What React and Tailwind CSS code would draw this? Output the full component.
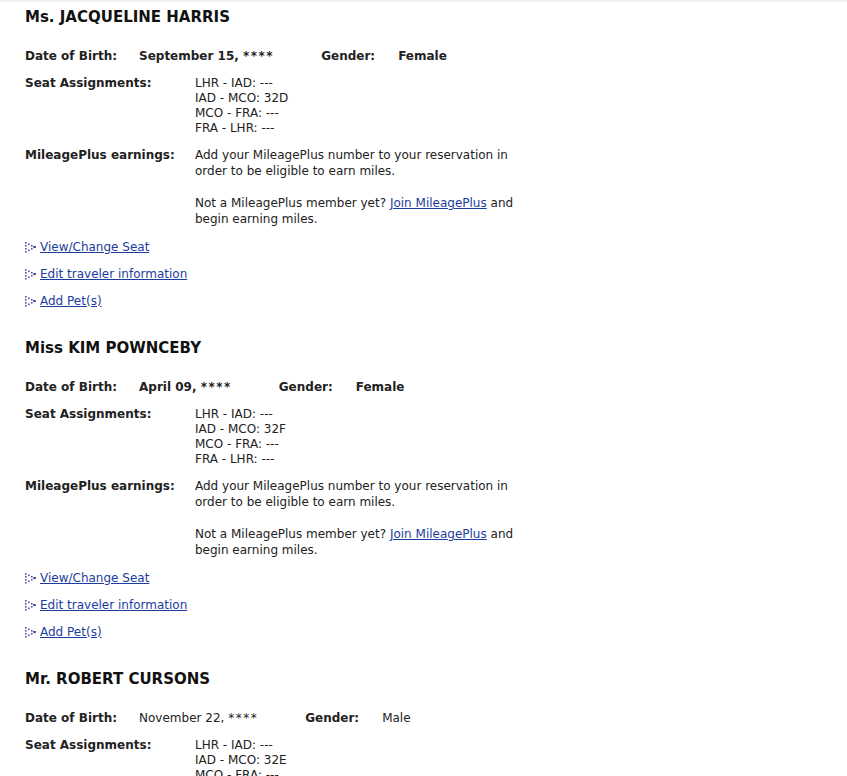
import React from "react";

const travelers = [
  {
    name: "Ms. JACQUELINE HARRIS",
    dob: "September 15, ",
    gender: "Female",
    boldValues: true,
    seats: ["LHR - IAD: ---", "IAD - MCO: 32D", "MCO - FRA: ---", "FRA - LHR: ---"],
  },
  {
    name: "Miss KIM POWNCEBY",
    dob: "April 09, ",
    gender: "Female",
    boldValues: true,
    seats: ["LHR - IAD: ---", "IAD - MCO: 32F", "MCO - FRA: ---", "FRA - LHR: ---"],
  },
  {
    name: "Mr. ROBERT CURSONS",
    dob: "November 22, ",
    gender: "Male",
    boldValues: false,
    seats: ["LHR - IAD: ---", "IAD - MCO: 32E", "MCO - FRA: ---", "FRA - LHR: ---"],
  },
];

function Arrow() {
  const dots = [
    [1, 1], [1, 4], [1, 7], [1, 10],
    [4, 2.5], [4, 8.5],
    [7, 4], [7, 7],
    [10, 5.5],
  ];
  return (
    <svg width="13" height="12" viewBox="0 0 13 12" className="shrink-0">
      {dots.map(([x, y], i) => (
        <rect key={i} x={x} y={y} width="1.6" height="1.6" fill="#5a4fb0" />
      ))}
      <rect x="9" y="5.2" width="3" height="1.4" fill="#3a3a7a" />
    </svg>
  );
}

function LinkRow({ children }) {
  return (
    <div className="flex items-center gap-[3px] h-[27px]">
      <Arrow />
      <a href="#" className="text-[#1c3d9e] underline">{children}</a>
    </div>
  );
}

function Traveler({ t }) {
  const valueClass = t.boldValues ? "font-bold" : "font-normal";
  return (
    <div className="pb-[24px]">
      <h2 className="pt-[1px] text-[15px] font-bold leading-[18px] text-[#111]">{t.name}</h2>
      <div className="flex items-baseline mt-[21px] leading-[18px]">
        <span className="font-bold mr-[22px]">Date of Birth:</span>
        <span className={valueClass + " mr-[47px]"}>
          {t.dob}
          <span className="tracking-[1.5px]">****</span>
        </span>
        <span className="font-bold mr-[23px]">Gender:</span>
        <span className={valueClass}>{t.gender}</span>
      </div>
      <div className="grid grid-cols-[170px_330px] mt-[11px] leading-[15px]">
        <span className="font-bold">Seat Assignments:</span>
        <div>
          {t.seats.map((s) => (
            <div key={s}>{s}</div>
          ))}
        </div>
      </div>
      <div className="grid grid-cols-[170px_330px] mt-[11px] leading-[16px]">
        <span className="font-bold">MileagePlus earnings:</span>
        <div>
          <p>Add your MileagePlus number to your reservation in order to be eligible to earn miles.</p>
          <p className="mt-[16px]">
            Not a MileagePlus member yet? <a href="#" className="text-[#1c3d9e] underline">Join MileagePlus</a> and begin earning miles.
          </p>
        </div>
      </div>
      <div className="mt-[6px] -ml-[1px]">
        <LinkRow>View/Change Seat</LinkRow>
        <LinkRow>Edit traveler information</LinkRow>
        <LinkRow>Add Pet(s)</LinkRow>
      </div>
    </div>
  );
}

export default function App() {
  return (
    <div
      className="min-h-[776px] bg-white text-[#222] text-[12px]"
      style={{ fontFamily: "Tahoma, 'DejaVu Sans', Verdana, sans-serif" }}
    >
      <div className="h-[3px] bg-gradient-to-b from-[#ececec] to-white" />
      <div className="pl-[25px] pt-[4px]">
        {travelers.map((t) => (
          <Traveler key={t.name} t={t} />
        ))}
      </div>
    </div>
  );
}
